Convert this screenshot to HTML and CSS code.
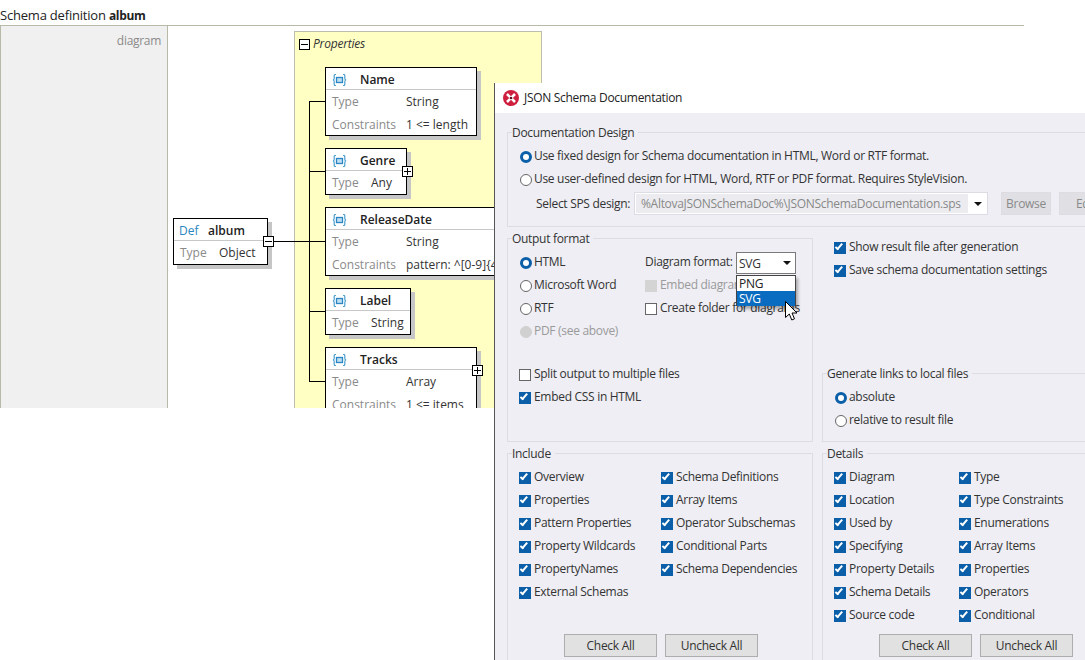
FILE: index.html
```html
<!DOCTYPE html>
<html lang="en">
<head>
    <meta charset="UTF-8">
    <title>JSON Schema Documentation</title>
    <link rel="stylesheet" href="styles.css">
</head>
<body>
    <div class = "doc_page">
        <div class = "doc_title">Schema definition <b>album</b></div>
        <div class = "doc_row">
            <div class = "cell_label">diagram</div>
            <div class = "cell_diagram">
                <div class = "box_properties">
                    <span class = "toggle"></span><i>Properties</i>
                </div>

                <svg class = "lines" width="340" height="390">
                    <path d="M105 215.5H157M141.5 75V356M141.5 75.5H157M141.5 145.5H157M141.5 285.5H157M141.5 355.5H157" fill="none" stroke="#000" stroke-width="1"/>
                </svg>

                <div class = "node node_album">
                    <div class = "node_head"><span class = "def">Def</span><b>album</b></div>
                    <div class = "node_line"><span class = "key key_short">Type</span>Object</div>
                    <span class = "toggle toggle_node"></span>
                </div>

                <div class = "node node_name">
                    <div class = "node_head"><svg class = "icon_prop" width="15" height="12" viewBox="0 0 15 12"><path d="M4 .5H3.300Q2.200 .5 2.200 1.800V4.500Q2.200 5.700 1 6Q2.200 6.300 2.200 7.500V10.200Q2.200 11.500 3.300 11.500H4M11 .5H11.700Q12.800 .5 12.800 1.800V4.500Q12.800 5.700 14 6Q12.800 6.300 12.800 7.500V10.200Q12.800 11.500 11.700 11.500H11" fill="none" stroke="#4a9fd0" stroke-width="1.200"/><rect x="4.500" y="3.500" width="6" height="5" fill="#bfe0f2" stroke="#2c86c4" stroke-width="1.300"/></svg><b>Name</b></div>
                    <div class = "node_line"><span class = "key">Type</span>String</div>
                    <div class = "node_line"><span class = "key">Constraints</span>1 &lt;= length</div>
                </div>

                <div class = "node node_genre">
                    <div class = "node_head"><svg class = "icon_prop" width="15" height="12" viewBox="0 0 15 12"><path d="M4 .5H3.300Q2.200 .5 2.200 1.800V4.500Q2.200 5.700 1 6Q2.200 6.300 2.200 7.500V10.200Q2.200 11.500 3.300 11.500H4M11 .5H11.700Q12.800 .5 12.800 1.800V4.500Q12.800 5.700 14 6Q12.800 6.300 12.800 7.500V10.200Q12.800 11.500 11.700 11.500H11" fill="none" stroke="#4a9fd0" stroke-width="1.200"/><rect x="4.500" y="3.500" width="6" height="5" fill="#bfe0f2" stroke="#2c86c4" stroke-width="1.300"/></svg><b>Genre</b></div>
                    <div class = "node_line"><span class = "key key_short">Type</span>Any</div>
                    <span class = "toggle toggle_node toggle_plus"></span>
                </div>

                <div class = "node node_date">
                    <div class = "node_head"><svg class = "icon_prop" width="15" height="12" viewBox="0 0 15 12"><path d="M4 .5H3.300Q2.200 .5 2.200 1.800V4.500Q2.200 5.700 1 6Q2.200 6.300 2.200 7.500V10.200Q2.200 11.500 3.300 11.500H4M11 .5H11.700Q12.800 .5 12.800 1.800V4.500Q12.800 5.700 14 6Q12.800 6.300 12.800 7.500V10.200Q12.800 11.500 11.700 11.500H11" fill="none" stroke="#4a9fd0" stroke-width="1.200"/><rect x="4.500" y="3.500" width="6" height="5" fill="#bfe0f2" stroke="#2c86c4" stroke-width="1.300"/></svg><b>ReleaseDate</b></div>
                    <div class = "node_line"><span class = "key">Type</span>String</div>
                    <div class = "node_line"><span class = "key">Constraints</span>pattern: ^[0-9]{4}-[0-9]{2}</div>
                </div>

                <div class = "node node_label">
                    <div class = "node_head"><svg class = "icon_prop" width="15" height="12" viewBox="0 0 15 12"><path d="M4 .5H3.300Q2.200 .5 2.200 1.800V4.500Q2.200 5.700 1 6Q2.200 6.300 2.200 7.500V10.200Q2.200 11.500 3.300 11.500H4M11 .5H11.700Q12.800 .5 12.800 1.800V4.500Q12.800 5.700 14 6Q12.800 6.300 12.800 7.500V10.200Q12.800 11.500 11.700 11.500H11" fill="none" stroke="#4a9fd0" stroke-width="1.200"/><rect x="4.500" y="3.500" width="6" height="5" fill="#bfe0f2" stroke="#2c86c4" stroke-width="1.300"/></svg><b>Label</b></div>
                    <div class = "node_line"><span class = "key key_short">Type</span>String</div>
                </div>

                <div class = "node node_tracks">
                    <div class = "node_head"><svg class = "icon_prop" width="15" height="12" viewBox="0 0 15 12"><path d="M4 .5H3.300Q2.200 .5 2.200 1.800V4.500Q2.200 5.700 1 6Q2.200 6.300 2.200 7.500V10.200Q2.200 11.500 3.300 11.500H4M11 .5H11.700Q12.800 .5 12.800 1.800V4.500Q12.800 5.700 14 6Q12.800 6.300 12.800 7.500V10.200Q12.800 11.500 11.700 11.500H11" fill="none" stroke="#4a9fd0" stroke-width="1.200"/><rect x="4.500" y="3.500" width="6" height="5" fill="#bfe0f2" stroke="#2c86c4" stroke-width="1.300"/></svg><b>Tracks</b></div>
                    <div class = "node_line"><span class = "key">Type</span>Array</div>
                    <div class = "node_line"><span class = "key">Constraints</span>1 &lt;= items</div>
                    <span class = "toggle toggle_node toggle_plus"></span>
                </div>
            </div>
        </div>
    </div>

    <div class = "dialog">
        <div class = "dialog_title">
            <svg width="16" height="16" viewBox="0 0 16 16"><circle cx="8" cy="8" r="8" fill="#cf1f3f"/><path d="M4 4L12 12M12 4L4 12" stroke="#fff" stroke-width="2.600"/><circle cx="8" cy="8" r="1.300" fill="#5a0c1c"/></svg>
            <span>JSON Schema Documentation</span>
        </div>

        <div class = "dialog_body">
            <fieldset class = "group group_design">
                <legend>Documentation Design</legend>
                <div class = "row"><span class = "radio radio_on"></span>Use fixed design for Schema documentation in HTML, Word or RTF format.</div>
                <div class = "row"><span class = "radio"></span>Use user-defined design for HTML, Word, RTF or PDF format. Requires StyleVision.</div>
                <div class = "row_sps">
                    <span class = "sps_label">Select SPS design:</span>
                    <span class = "sps_input"><span class = "sps_value">%AltovaJSONSchemaDoc%\JSONSchemaDocumentation.sps</span><span class = "arrow"></span></span>
                    <span class = "btn btn_off btn_browse">Browse</span>
                    <span class = "btn btn_off btn_edit">Edit</span>
                </div>
            </fieldset>

            <fieldset class = "group group_output">
                <legend>Output format</legend>
                <div class = "output_top">
                    <div class = "col_format">
                        <div class = "row"><span class = "radio radio_on"></span>HTML</div>
                        <div class = "row"><span class = "radio"></span>Microsoft Word</div>
                        <div class = "row"><span class = "radio"></span>RTF</div>
                        <div class = "row row_off"><span class = "radio radio_off"></span>PDF (see above)</div>
                    </div>
                    <div class = "col_diagram">
                        <div class = "row">
                            <span class = "format_label">Diagram format:</span>
                            <span class = "combo">SVG<span class = "arrow"></span>
                                <span class = "combo_list">
                                    <span class = "combo_item">PNG</span>
                                    <span class = "combo_item combo_selected">SVG</span>
                                </span>
                            </span>
                        </div>
                        <div class = "row row_off"><span class = "check check_off"></span>Embed diagrams in</div>
                        <div class = "row"><span class = "check check_empty"></span>Create folder for diagrams</div>
                    </div>
                </div>
                <div class = "output_bottom">
                    <div class = "row"><span class = "check check_empty"></span>Split output to multiple files</div>
                    <div class = "row"><span class = "check"></span>Embed CSS in HTML</div>
                </div>
            </fieldset>

            <div class = "col_side">
                <div class = "side_checks">
                    <div class = "row"><span class = "check"></span>Show result file after generation</div>
                    <div class = "row"><span class = "check"></span>Save schema documentation settings</div>
                </div>
                <fieldset class = "group group_links">
                    <legend>Generate links to local files</legend>
                    <div class = "row"><span class = "radio radio_on"></span>absolute</div>
                    <div class = "row"><span class = "radio"></span>relative to result file</div>
                </fieldset>
            </div>

            <fieldset class = "group group_include">
                <legend>Include</legend>
                <div class = "check_columns">
                    <div class = "col_include">
                        <div class = "row"><span class = "check"></span>Overview</div>
                        <div class = "row"><span class = "check"></span>Properties</div>
                        <div class = "row"><span class = "check"></span>Pattern Properties</div>
                        <div class = "row"><span class = "check"></span>Property Wildcards</div>
                        <div class = "row"><span class = "check"></span>PropertyNames</div>
                        <div class = "row"><span class = "check"></span>External Schemas</div>
                    </div>
                    <div>
                        <div class = "row"><span class = "check"></span>Schema Definitions</div>
                        <div class = "row"><span class = "check"></span>Array Items</div>
                        <div class = "row"><span class = "check"></span>Operator Subschemas</div>
                        <div class = "row"><span class = "check"></span>Conditional Parts</div>
                        <div class = "row"><span class = "check"></span>Schema Dependencies</div>
                    </div>
                </div>
                <div class = "box_buttons">
                    <span class = "btn">Check All</span>
                    <span class = "btn">Uncheck All</span>
                </div>
            </fieldset>

            <fieldset class = "group group_details">
                <legend>Details</legend>
                <div class = "check_columns">
                    <div class = "col_details">
                        <div class = "row"><span class = "check"></span>Diagram</div>
                        <div class = "row"><span class = "check"></span>Location</div>
                        <div class = "row"><span class = "check"></span>Used by</div>
                        <div class = "row"><span class = "check"></span>Specifying</div>
                        <div class = "row"><span class = "check"></span>Property Details</div>
                        <div class = "row"><span class = "check"></span>Schema Details</div>
                        <div class = "row"><span class = "check"></span>Source code</div>
                    </div>
                    <div>
                        <div class = "row"><span class = "check"></span>Type</div>
                        <div class = "row"><span class = "check"></span>Type Constraints</div>
                        <div class = "row"><span class = "check"></span>Enumerations</div>
                        <div class = "row"><span class = "check"></span>Array Items</div>
                        <div class = "row"><span class = "check"></span>Properties</div>
                        <div class = "row"><span class = "check"></span>Operators</div>
                        <div class = "row"><span class = "check"></span>Conditional</div>
                    </div>
                </div>
                <div class = "box_buttons">
                    <span class = "btn">Check All</span>
                    <span class = "btn">Uncheck All</span>
                </div>
            </fieldset>
        </div>

        <svg class = "cursor" width="13" height="20" viewBox="0 0 13 20"><path d="M.5 .5V16.500L4.300 13L6.800 19L9.500 17.800L7 12H12Z" fill="#fff" stroke="#000"/></svg>
    </div>
</body>
</html>
```

FILE: styles.css
```css
html, body
{
    margin: 0;
    padding: 0;
}

body
{
    position: relative;
    width: 1085px;
    height: 660px;
    overflow: hidden;
    background-color: white;
    font-family: "Open Sans", "Noto Sans", sans-serif;
    font-size: 12px;
    color: #333;
}

/* document behind the dialog */

.doc_page
{
    height: 408px;
    overflow: hidden;
}

.doc_title
{
    height: 25px;
    width: 1024px;
    font-size: 13px;
    letter-spacing: -0.2px;
    line-height: 31px;
    border-bottom: 1px solid #b9b9a8;
    color: #222;
    white-space: nowrap;
}

.doc_title b
{
    font-size: 12px;
    font-weight: 700;
    letter-spacing: -0.3px;
}

.doc_row
{
    display: flex;
    height: 382px;
    width: 1024px;
}

.cell_label
{
    width: 168px;
    flex: none;
    box-sizing: border-box;
    border-left: 1px solid #b9b9a8;
    border-right: 1px solid #b9b9a8;
    background-color: #f0f0f0;
    text-align: right;
    color: #8a8a8a;
    letter-spacing: -0.3px;
    padding: 6px 6px 0 0;
}

.cell_diagram
{
    position: relative;
    flex: 1;
}

.box_properties
{
    position: absolute;
    left: 126px;
    top: 5px;
    width: 242px;
    height: 500px;
    border: 1px solid #bdbdb0;
    background-color: #ffffc4;
    padding: 4px 0 0 4px;
    display: flex;
    align-items: flex-start;
    gap: 3px;
    line-height: 16px;
    letter-spacing: -0.2px;
}

.box_properties i { color: #333; }

.box_properties .toggle { margin-top: 3px; }

.lines
{
    position: absolute;
    left: 0;
    top: 0;
}

.node
{
    position: absolute;
    box-sizing: border-box;
    background-color: white;
    border: 1px solid #000;
    box-shadow: 4px 4px 0 #c6c6c6;
    white-space: nowrap;
}

.node_album { left: 5px; top: 192px; width: 95px; height: 47px; }
.node_name { left: 157px; top: 41px; width: 152px; height: 69px; }
.node_genre { left: 157px; top: 122px; width: 82px; height: 47px; }
.node_date { left: 157px; top: 181px; width: 300px; height: 69px; }
.node_label { left: 157px; top: 262px; width: 86px; height: 47px; }
.node_tracks { left: 157px; top: 321px; width: 152px; height: 69px; }

.node_head
{
    display: flex;
    align-items: center;
    box-sizing: border-box;
    height: 22px;
    padding: 2px 0 0 6px;
    border-bottom: 1px solid #c8c8c8;
    color: #222;
}

.node_album .node_head { padding-left: 5px; }

.node_head b { font-weight: 600; }

.icon_prop { margin-right: 13px; }

.def
{
    color: #2a86c0;
    width: 29px;
    flex: none;
}

.node_line
{
    height: 23px;
    line-height: 23px;
    padding-left: 6px;
    display: flex;
}

.key
{
    width: 74px;
    flex: none;
    color: #8a8a8a;
}

.key_short { width: 39px; }

.toggle
{
    display: block;
    position: relative;
    width: 11px;
    height: 11px;
    flex: none;
    box-sizing: border-box;
    border: 1px solid #000;
    background-color: white;
}

.toggle::before
{
    content: "";
    position: absolute;
    left: 1px;
    right: 1px;
    top: 4px;
    height: 1px;
    background-color: #000;
}

.toggle_plus::after
{
    content: "";
    position: absolute;
    top: 1px;
    bottom: 1px;
    left: 4px;
    width: 1px;
    background-color: #000;
}

.toggle_node
{
    position: absolute;
    right: -7px;
    top: 17px;
}

/* dialog */

.dialog
{
    position: absolute;
    left: 494px;
    top: 83px;
    width: 591px;
    height: 577px;
    overflow: hidden;
    border-left: 1px solid #555;
    box-sizing: border-box;
    background-color: #eeeef4;
    letter-spacing: -0.3px;
}

.dialog_title
{
    display: flex;
    align-items: center;
    gap: 5px;
    box-sizing: border-box;
    height: 30px;
    padding: 0 0 1px 8px;
    background-color: white;
    color: #222;
}

.dialog_body
{
    display: grid;
    grid-template-columns: 306px 320px;
    column-gap: 9px;
    grid-template-rows: 103px 212px 230px;
    row-gap: 3px;
    padding: 11px 0 0 12px;
    width: 680px;
}

.group
{
    margin: 0;
    padding: 4px 0 0 12px;
    border: 1px solid #dcdce4;
    box-sizing: border-box;
    min-width: 0;
}

.group legend
{
    position: relative;
    top: 1px;
    padding: 0 4px 0 0;
    margin-left: -8px;
    line-height: 16px;
}

.group_design { grid-column: 1 / 3; }

.row
{
    display: flex;
    align-items: center;
    height: 23px;
    white-space: nowrap;
}

.row_off { color: #9a9a9a; }

.radio
{
    position: relative;
    top: 1px;
    width: 12px;
    height: 12px;
    box-sizing: border-box;
    flex: none;
    margin-right: 2px;
    border: 1px solid #666;
    border-radius: 50%;
    background-color: white;
}

.radio_on { border: 3.5px solid #0a5fa8; }

.radio_off
{
    border-color: #d0d0d0;
    background-color: #d0d0d0;
}

.check
{
    position: relative;
    top: 1px;
    width: 12px;
    height: 12px;
    box-sizing: border-box;
    flex: none;
    margin: 0 3px 0 -1px;
    background-color: #0a5fa8;
}

.check::after
{
    content: "";
    position: absolute;
    left: 3px;
    top: 0.5px;
    width: 4px;
    height: 7.500px;
    box-sizing: border-box;
    border-right: 2px solid white;
    border-bottom: 2px solid white;
    transform: rotate(40deg);
}

.check_empty
{
    background-color: white;
    border: 1px solid #666;
}

.check_off { background-color: #d4d4d4; }

.check_empty::after, .check_off::after { display: none; }

.row_sps
{
    display: flex;
    align-items: center;
    height: 23px;
    margin-top: 2px;
    white-space: nowrap;
}

.sps_label
{
    margin-left: 16px;
    width: 98px;
    flex: none;
}

.sps_input
{
    display: flex;
    align-items: center;
    justify-content: space-between;
    box-sizing: border-box;
    width: 354px;
    height: 23px;
    flex: none;
    padding: 0 5px 0 1px;
    background-color: white;
    border: 1px solid #dcdce4;
}

.sps_value
{
    display: block;
    width: 332px;
    line-height: 19px;
    padding-left: 5px;
    box-sizing: border-box;
    background-color: #ececf0;
    color: #888;
    overflow: hidden;
}

.arrow
{
    width: 0;
    height: 0;
    border-left: 4px solid transparent;
    border-right: 4px solid transparent;
    border-top: 4px solid #111;
}

.btn
{
    display: block;
    box-sizing: border-box;
    width: 93px;
    height: 23px;
    line-height: 21px;
    text-align: center;
    background-color: #e1e1e1;
    border: 1px solid #adadad;
    flex: none;
    color: #333;
}

.btn_off
{
    background-color: #dfdfe4;
    border-color: #dcdce2;
    color: #8a8a8a;
}

.btn_browse { width: 50px; margin-left: 13px; }
.btn_edit { width: 50px; margin-left: 8px; text-align: left; padding-left: 16px; }

.output_top { display: flex; }

.col_format { width: 125px; flex: none; }

.col_diagram .check { margin-left: 0; }

.format_label { width: 91px; flex: none; }

.combo
{
    position: relative;
    display: flex;
    align-items: center;
    justify-content: space-between;
    box-sizing: border-box;
    width: 60px;
    height: 22px;
    margin-top: 3px;
    padding: 0 4px 0 2px;
    border: 1px solid #7a7a7a;
    background-color: white;
}

.combo_list
{
    position: absolute;
    left: -1px;
    top: 22px;
    width: 60px;
    box-sizing: border-box;
    border: 1px solid #444;
    border-bottom: none;
    background-color: white;
    box-shadow: 2px 3px 3px rgba(0,0,0,0.3);
    z-index: 2;
}

.combo_item
{
    display: block;
    height: 15px;
    line-height: 15px;
    padding-left: 2px;
    color: #222;
}

.combo_selected
{
    background-color: #0a6cc0;
    color: white;
}

.output_bottom { margin-top: 20px; }

.col_side
{
    display: flex;
    flex-direction: column;
    justify-content: space-between;
}

.side_checks { padding: 5px 0 0 13px; }

.group_links { height: 77px; }

.check_columns { display: flex; }

.col_include { width: 142px; flex: none; }
.col_details { width: 125px; flex: none; }

.col_include, .col_details { min-height: 161px; }

.box_buttons
{
    display: flex;
    gap: 8px;
    margin: 8px 0 0 44px;
}

.cursor
{
    position: absolute;
    left: 290px;
    top: 218px;
    z-index: 3;
}
```
